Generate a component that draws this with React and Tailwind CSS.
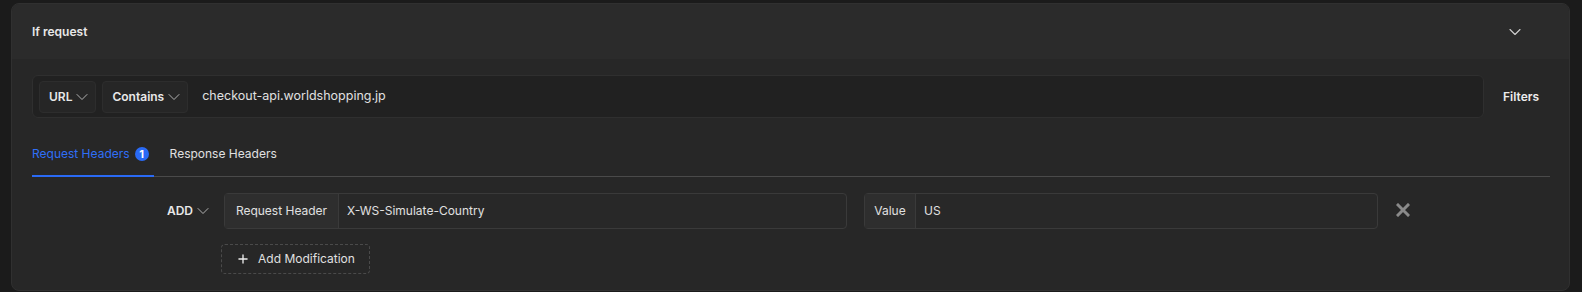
import React from 'react';
import { ChevronDown, Plus } from 'lucide-react';

function Chevron({ size = 20, className = '' }) {
    return <ChevronDown size={size} strokeWidth={1.1} className={className} />;
}

export default function App() {
    return (
        <div className="min-h-[292px] w-full bg-[#1b1b1b] pt-[3px] pl-[11px] pr-[12px] text-[#e5e5e5]" style={{ fontFamily: 'Inter, "Noto Sans", sans-serif' }}>
            <div className="h-[288px] rounded-lg border border-[#303030] bg-[#272727] overflow-hidden">
                {/* header */}
                <div className="h-[55px] bg-[#2b2b2b] flex items-center justify-between pl-[20px] pr-[44px]">
                    <span className="text-xs font-semibold text-[#e8e8e8]">If request</span>
                    <ChevronDown size={20} strokeWidth={1.3} className="text-[#cfcfcf]" />
                </div>

                <div className="pl-[20px] pr-[19px]">
                    {/* filter bar */}
                    <div className="mt-[16px] flex items-center">
                        <div className="h-[43px] w-[1452px] rounded-md border border-[#2f2f2f] bg-[#212121] flex items-center gap-[6px] px-[6px]">
                            <button className="h-[32px] pl-[9px] pr-[3px] rounded border border-[#2d2d2d] bg-[#262626] flex items-center text-xs font-semibold text-[#e8e8e8]">
                                URL <Chevron className="text-[#bdbdbd]" />
                            </button>
                            <button className="h-[32px] pl-[9px] pr-[3px] rounded border border-[#2d2d2d] bg-[#262626] flex items-center text-xs font-semibold text-[#e8e8e8]">
                                Contains <Chevron className="text-[#bdbdbd]" />
                            </button>
                            <span className="ml-[8px] text-[12.5px] text-[#e0e0e0]">checkout-api.worldshopping.jp</span>
                        </div>
                        <span className="ml-[19px] text-xs font-semibold text-[#ececec]">Filters</span>
                    </div>

                    {/* tabs */}
                    <div className="mt-[28px] flex border-b border-[#4a4a4a]">
                        <div className="flex items-center gap-[5px] pb-[13px] border-b-2 border-[#2a6af5] -mb-px pr-[5px]">
                            <span className="text-xs text-[#2f6ff7]">Request Headers</span>
                            <span className="w-[14px] h-[14px] rounded-full bg-[#2a6af5] text-white text-[11px] font-bold flex items-center justify-center leading-none">1</span>
                        </div>
                        <div className="ml-[16px] pb-[13px] text-xs text-[#e0e0e0]">Response Headers</div>
                    </div>

                    {/* modification row */}
                    <div className="mt-[16px] flex items-center">
                        <div className="w-[192px] flex justify-end items-center pr-[11px]">
                            <span className="text-xs font-semibold text-[#e8e8e8]">ADD</span>
                            <Chevron className="text-[#bdbdbd]" />
                        </div>
                        <div className="h-[36px] w-[623px] rounded border border-[#3a3a3a] bg-[#282828] flex">
                            <div className="w-[114px] flex items-center justify-center bg-[#2e2e2e] border-r border-[#3a3a3a] text-xs text-[#e0e0e0]">Request Header</div>
                            <div className="flex items-center pl-[8px] text-xs text-[#e0e0e0]">X-WS-Simulate-Country</div>
                        </div>
                        <div className="ml-[17px] h-[36px] w-[514px] rounded border border-[#3a3a3a] bg-[#282828] flex">
                            <div className="w-[51px] flex items-center justify-center bg-[#2e2e2e] border-r border-[#3a3a3a] text-xs text-[#e0e0e0]">Value</div>
                            <div className="flex items-center pl-[8px] text-xs text-[#e0e0e0]">US</div>
                        </div>
                        <svg width="14" height="14" viewBox="0 0 14 14" className="ml-[18px] -mt-[3px]">
                            <path d="M2 2 L12 12 M12 2 L2 12" stroke="#8a8a8a" strokeWidth="3" strokeLinecap="square" />
                        </svg>
                    </div>

                    {/* add modification */}
                    <div className="mt-[15px] pl-[189px]">
                        <button className="h-[30px] w-[149px] rounded border border-dashed border-[#4a4a4a] flex items-center justify-center gap-[8px] text-xs text-[#e0e0e0]">
                            <Plus size={14} strokeWidth={2.25} className="text-[#eeeeee]" />
                            Add Modification
                        </button>
                    </div>
                </div>
            </div>
        </div>
    );
}
